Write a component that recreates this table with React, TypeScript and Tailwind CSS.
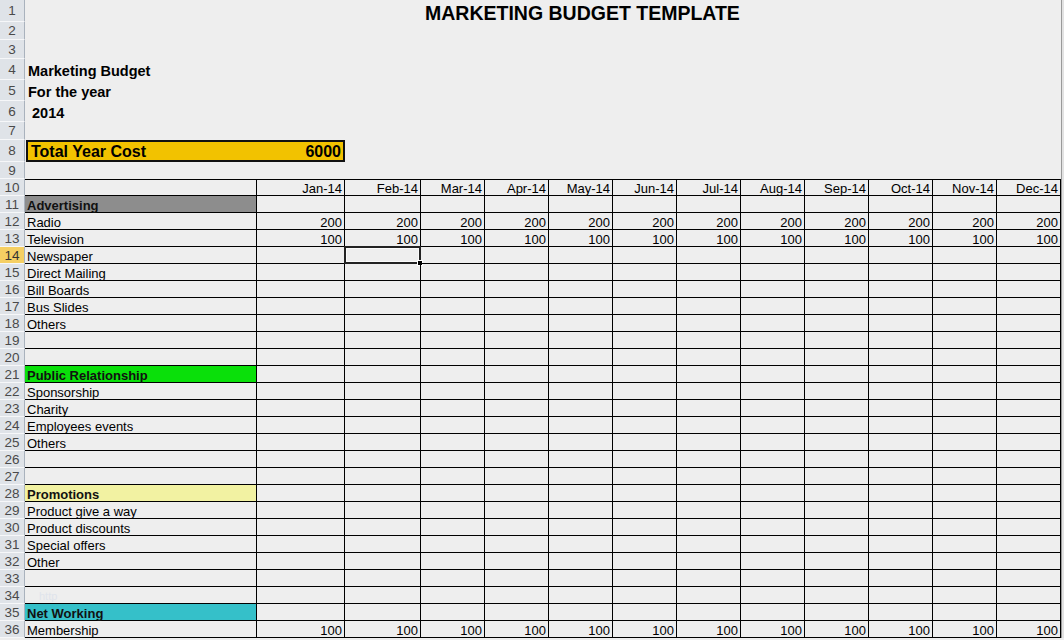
import React from "react";

const months = ["Jan-14", "Feb-14", "Mar-14", "Apr-14", "May-14", "Jun-14", "Jul-14", "Aug-14", "Sep-14", "Oct-14", "Nov-14", "Dec-14"];

const cols = "grid grid-cols-[25px_232px_88px_76px_repeat(10,64px)_3px] grid-rows-[100%]";

type Row = { n: number; label?: string; fill?: string; values?: string; faint?: string };

const rows: Row[] = [
  { n: 11, label: "Advertising", fill: "bg-[#8d8d8d]" },
  { n: 12, label: "Radio", values: "200" },
  { n: 13, label: "Television", values: "100" },
  { n: 14, label: "Newspaper" },
  { n: 15, label: "Direct Mailing" },
  { n: 16, label: "Bill Boards" },
  { n: 17, label: "Bus Slides" },
  { n: 18, label: "Others" },
  { n: 19 },
  { n: 20 },
  { n: 21, label: "Public Relationship", fill: "bg-[#0ae00a]" },
  { n: 22, label: "Sponsorship" },
  { n: 23, label: "Charity" },
  { n: 24, label: "Employees events" },
  { n: 25, label: "Others" },
  { n: 26 },
  { n: 27 },
  { n: 28, label: "Promotions", fill: "bg-[#f2f2a2]" },
  { n: 29, label: "Product give a way" },
  { n: 30, label: "Product discounts" },
  { n: 31, label: "Special offers" },
  { n: 32, label: "Other" },
  { n: 33 },
  { n: 34, faint: "http" },
  { n: 35, label: "Net Working", fill: "bg-[#35c0c9]" },
  { n: 36, label: "Membership", values: "100" },
];

function RowHead({ n, active }: { n: number; active?: boolean }) {
  return (
    <div
      className={`flex items-center justify-center border-r border-b border-r-[#a9b2bd] border-b-[#f6f7f9] pt-px text-[13.5px] leading-none ${
        active ? "bg-[#f5cf63] text-[#333]" : "bg-[#dfe3e8] text-[#4a4a4a]"
      }`}
    >
      {n}
    </div>
  );
}

function Edge() {
  return <div className="border-l border-[#9a9a9a] bg-[#e2e2e2]" />;
}

export default function App() {
  return (
    <div className="w-[1064px] h-[640px] overflow-hidden bg-[#eeeeee] text-black font-['Liberation_Sans',Arial,sans-serif]">
      {/* rows 1-9 */}
      <div className={`${cols} h-[22px]`}>
        <RowHead n={1} />
        <div className="col-span-13 pl-[400px] pt-[4px] font-bold text-[19.5px] leading-[18px]">MARKETING BUDGET TEMPLATE</div>
        <Edge />
      </div>
      <div className={`${cols} h-[18px]`}>
        <RowHead n={2} />
        <div className="col-span-13" />
        <Edge />
      </div>
      <div className={`${cols} h-[19px]`}>
        <RowHead n={3} />
        <div className="col-span-13" />
        <Edge />
      </div>
      <div className={`${cols} h-[21px]`}>
        <RowHead n={4} />
        <div className="col-span-13 flex items-center pl-[3px] pt-[4px] font-bold text-[14.5px] leading-none">Marketing Budget</div>
        <Edge />
      </div>
      <div className={`${cols} h-[21px]`}>
        <RowHead n={5} />
        <div className="col-span-13 flex items-center pl-[3px] pt-[4px] font-bold text-[14.5px] leading-none">For the year</div>
        <Edge />
      </div>
      <div className={`${cols} h-[21px]`}>
        <RowHead n={6} />
        <div className="col-span-13 flex items-center pl-[7px] pt-[4px] font-bold text-[14.5px] leading-none">2014</div>
        <Edge />
      </div>
      <div className={`${cols} h-[18px]`}>
        <RowHead n={7} />
        <div className="col-span-13" />
        <Edge />
      </div>
      <div className={`${cols} h-[22px]`}>
        <RowHead n={8} />
        <div className="col-span-2 ml-px flex items-center justify-between border-2 border-[#111] bg-[#f2c200] pl-[3px] pr-[2px] pt-px font-bold text-[16px] leading-none">
          <span>Total Year Cost</span>
          <span>6000</span>
        </div>
        <div className="col-span-11" />
        <Edge />
      </div>
      <div className={`${cols} h-[17px]`}>
        <RowHead n={9} />
        <div className="col-span-13" />
        <Edge />
      </div>

      {/* row 10: month headers */}
      <div className={`${cols} h-[17px] text-[13px] leading-none`}>
        <RowHead n={10} />
        <div className="border-t border-b border-r border-black" />
        {months.map((m) => (
          <div key={m} className="flex items-center justify-end border-t border-b border-r border-black pr-[2px] pt-px">
            {m}
          </div>
        ))}
        <Edge />
      </div>

      {rows.map((r) => (
        <div key={r.n} className={`${cols} h-[17px] text-[13px] leading-none`}>
          <RowHead n={r.n} active={r.n === 14} />
          <div
            className={`flex items-center border-b border-r border-black pl-[2px] pt-[2px] ${
              r.fill ? `${r.fill} font-bold text-[#111]` : ""
            }`}
          >
            {r.label}
            {r.faint && <span className="pl-[12px] text-[11px] text-[#dfe4ec]">{r.faint}</span>}
          </div>
          {months.map((m, i) => (
            <div key={m} className="relative flex items-center justify-end border-b border-r border-black pr-[2px] pt-[2px]">
              {r.values}
              {r.n === 14 && i === 1 && (
                <>
                  <div className="absolute -left-px -top-px h-[18px] w-[77px] border-2 border-[#222]">
                    <div className="h-full w-full border border-white/70" />
                  </div>
                  <div className="absolute -bottom-[3px] -right-[3px] h-[6px] w-[6px] border border-white bg-black" />
                </>
              )}
            </div>
          ))}
          <Edge />
        </div>
      ))}
    </div>
  );
}
